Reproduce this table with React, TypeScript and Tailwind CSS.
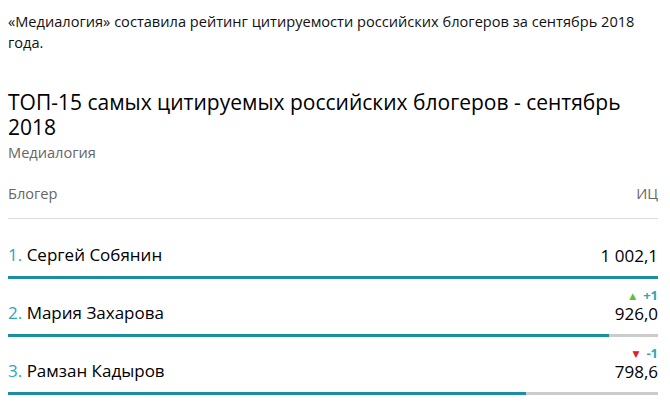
const rows = [
  { rank: 1, name: "Сергей Собянин", value: 1002.1, label: "1 002,1", change: 0 },
  { rank: 2, name: "Мария Захарова", value: 926.0, label: "926,0", change: 1 },
  { rank: 3, name: "Рамзан Кадыров", value: 798.6, label: "798,6", change: -1 },
];

const max = 1002.1;

const Row = ({ r }: { r: (typeof rows)[number] }) => (
  <div className="flex flex-col">
    <div className="flex items-end justify-between h-[45px]">
      <div className="text-[17px] leading-[22px] text-[#000]">
        <span className="text-[#2aa7b6]">{r.rank}.</span> {r.name}
      </div>
      <div className="flex flex-col items-end">
        {r.change !== 0 && (
          <div className="flex items-center gap-[7px] text-[13px] leading-[13px] font-bold text-[#2aa7b6] mb-[2px]">
            {r.change > 0 ? (
              <span className="text-[#5cc23a] text-[9px]">▲</span>
            ) : (
              <span className="text-[#e02020] text-[9px]">▼</span>
            )}
            <span>{r.change > 0 ? `+${r.change}` : r.change}</span>
          </div>
        )}
        <div className="text-[17px] leading-[20px] text-[#000]">{r.label}</div>
      </div>
    </div>
    <div className="h-[3px] bg-[#cccccc] mt-[10px]">
      <div className="h-full bg-[#1b8fa1]" style={{ width: `${(r.value / max) * 100}%` }} />
    </div>
  </div>
);

export default function App() {
  return (
    <div className="w-[670px] h-[406px] overflow-hidden bg-white pl-[8px] pr-[12px] pt-[11px] font-['Open_Sans','DejaVu_Sans',sans-serif] text-[#111]">
      <p className="text-[14.6px] leading-[21px]">
        «Медиалогия» составила рейтинг цитируемости российских блогеров за сентябрь 2018 года.
      </p>
      <h2 className="mt-[37px] text-[21px] leading-[25px] text-[#000]">
        ТОП-15 самых цитируемых российских блогеров - сентябрь 2018
      </h2>
      <div className="text-[14.6px] leading-[25px] text-[#666]">Медиалогия</div>
      <div className="mt-[18px] flex justify-between text-[14.6px] leading-[20px] text-[#666] pb-[15px] border-b border-[#ddd]">
        <span>Блогер</span>
        <span>ИЦ</span>
      </div>
      <div className="flex flex-col mt-[2px]">
        {rows.map((r) => (
          <Row key={r.rank} r={r} />
        ))}
      </div>
    </div>
  );
}
